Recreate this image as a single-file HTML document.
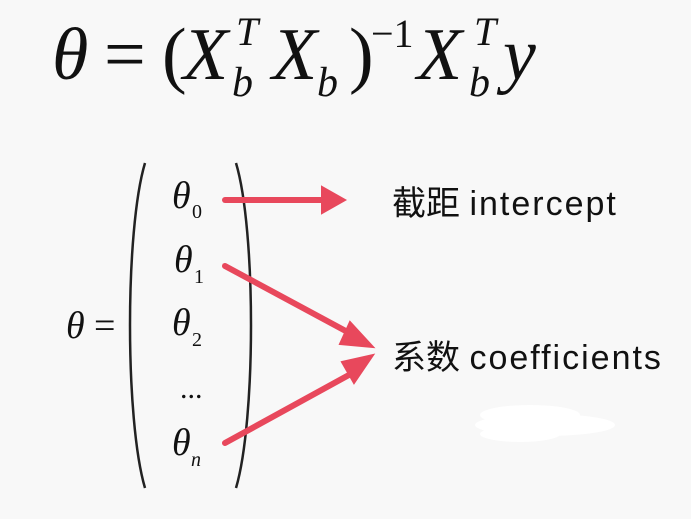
<!DOCTYPE html>
<html><head><meta charset="utf-8"><style>
html,body{margin:0;padding:0;background:#f8f8f8;width:691px;height:519px;overflow:hidden}
svg{display:block}
.m{font-family:"Liberation Serif",serif;font-style:italic;fill:#111}
.r{font-family:"Liberation Serif",serif;fill:#111}
.t{font-family:"Liberation Sans","Noto Sans CJK SC",sans-serif;fill:#111;font-size:34px}
.l{letter-spacing:2px}
</style></head><body>
<svg width="691" height="519" viewBox="0 0 691 519">
<rect width="691" height="519" fill="#f8f8f8"/>
<!-- top formula -->
<text class="m" x="52" y="79" font-size="74">θ</text>
<text class="r" x="104" y="79" font-size="74">=</text>
<text class="r" x="162" y="79" font-size="74">(</text>
<text class="m" x="183" y="79" font-size="74">X</text>
<text class="m" x="236" y="45" font-size="40">T</text>
<text class="m" x="232" y="96" font-size="42">b</text>
<text class="m" x="272" y="79" font-size="74">X</text>
<text class="m" x="317" y="96" font-size="42">b</text>
<text class="r" x="349" y="79" font-size="74">)</text>
<text class="r" x="371" y="47" font-size="40">−1</text>
<text class="m" x="417" y="79" font-size="74">X</text>
<text class="m" x="474" y="45" font-size="40">T</text>
<text class="m" x="469" y="96" font-size="42">b</text>
<text class="m" x="503" y="79" font-size="74">y</text>
<!-- lower -->
<text class="m" x="66" y="338" font-size="38">θ</text>
<text class="r" x="94" y="338" font-size="38">=</text>
<path d="M145 163 C125 230 125 420 145 488" stroke="#222" stroke-width="2.5" fill="none"/>
<path d="M236 163 C256 230 256 420 236 488" stroke="#222" stroke-width="2.5" fill="none"/>
<text class="m" x="172" y="208" font-size="38">θ</text><text class="r" x="192" y="218" font-size="20">0</text>
<text class="m" x="174" y="272" font-size="38">θ</text><text class="r" x="194" y="283" font-size="20">1</text>
<text class="m" x="172" y="335" font-size="38">θ</text><text class="r" x="192" y="346" font-size="20">2</text>
<text class="r" x="180" y="398" font-size="30">...</text>
<text class="m" x="172" y="455" font-size="38">θ</text><text class="m" x="191" y="466" font-size="20">n</text>
<g stroke="#e8485c" stroke-width="6" fill="#e8485c" stroke-linecap="round">
<line x1="225" y1="200" x2="325" y2="200"/>
<polygon points="322,187 345,200 322,213" stroke-width="2"/>
<line x1="225" y1="266" x2="355" y2="336"/>
<polygon points="350,322 373,347 340,344" stroke-width="2"/>
<line x1="225" y1="443" x2="358" y2="370"/>
<polygon points="342,362 373,355 354,383" stroke-width="2"/>
</g>
<text class="t" x="392" y="215">截距 <tspan class="l">intercept</tspan></text>
<text class="t" x="392" y="369">系数 <tspan class="l">coefficients</tspan></text>
<ellipse cx="530" cy="415" rx="50" ry="10" fill="#ffffff"/>
<ellipse cx="545" cy="425" rx="70" ry="11" fill="#ffffff"/>
<ellipse cx="520" cy="434" rx="40" ry="8" fill="#ffffff"/>
</svg>
</body></html>
